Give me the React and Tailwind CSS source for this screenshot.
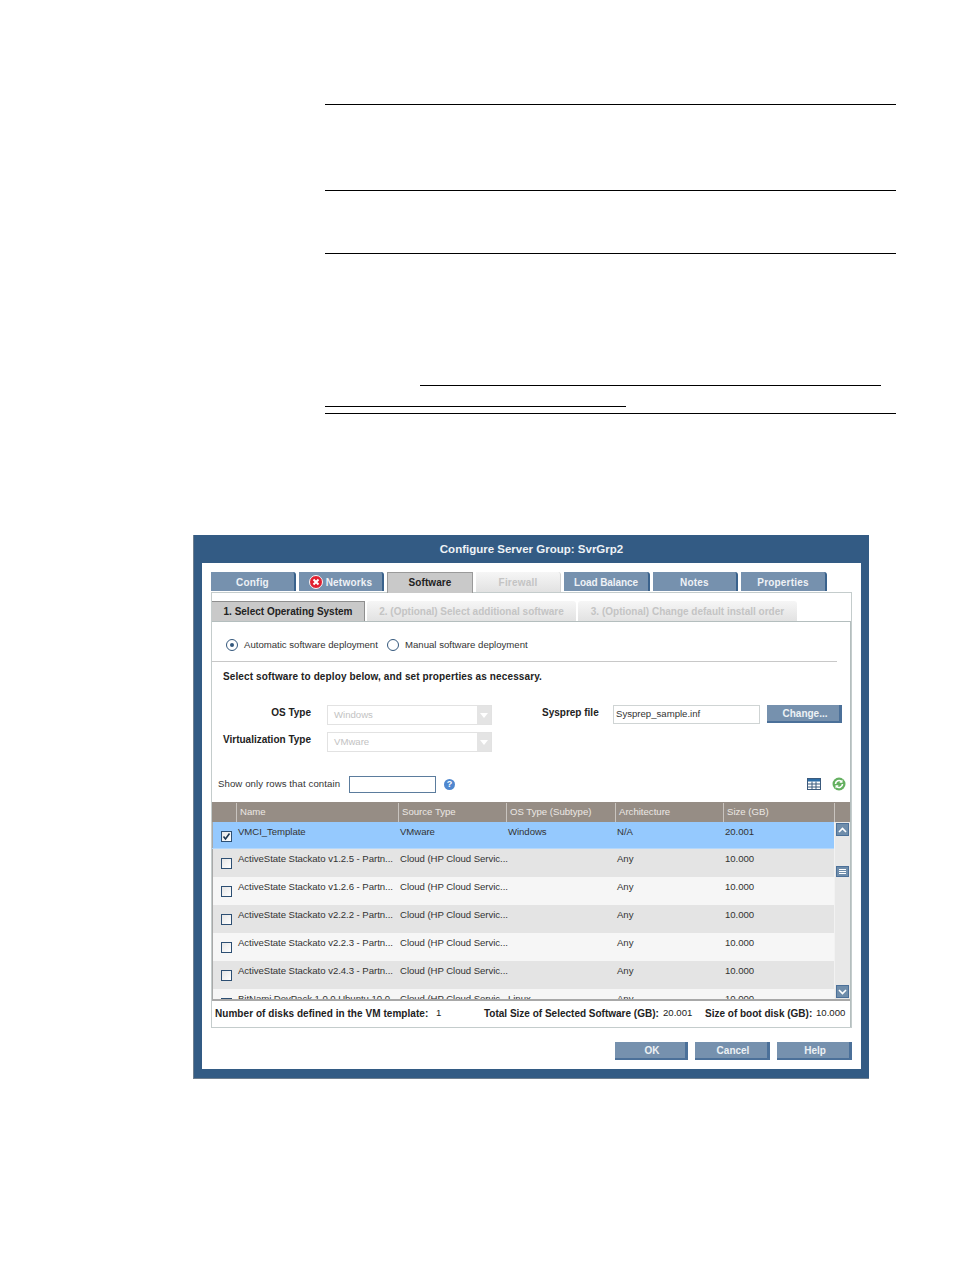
const FONT = "font-['Liberation_Sans',Arial,sans-serif]"

const TABS = [
  { label: 'Config', w: 'w-[85px]', track: 'tracking-[0.2px]' },
  { label: 'Networks', w: 'w-[85px]', track: 'tracking-[0.2px]', error: true },
  { label: 'Software', w: 'w-[86px]', track: 'tracking-[0.1px]', active: true },
  { label: 'Firewall', w: 'w-[85px]', track: 'tracking-[0.2px]', disabled: true },
  { label: 'Load Balance', w: 'w-[86px]', track: 'tracking-[-0.1px]' },
  { label: 'Notes', w: 'w-[85px]', track: 'tracking-[0.2px]' },
  { label: 'Properties', w: 'w-[86px]', track: 'tracking-[0.2px]' },
]

const STEPS = [
  { label: '1. Select Operating System', w: 'w-[153px]', active: true },
  { label: '2. (Optional) Select additional software', w: 'w-[209px]' },
  { label: '3. (Optional) Change default install order', w: 'w-[219px]' },
]

const COLS = ['w-[24px]', 'w-[162px]', 'w-[108px]', 'w-[109px]', 'w-[108px]', 'w-[111px]']

const ROWS = [
  { name: 'ActiveState Stackato v1.2.5 - Partn...' },
  { name: 'ActiveState Stackato v1.2.6 - Partn...' },
  { name: 'ActiveState Stackato v2.2.2 - Partn...' },
  { name: 'ActiveState Stackato v2.2.3 - Partn...' },
  { name: 'ActiveState Stackato v2.4.3 - Partn...' },
]

function ErrorIcon() {
  return (
    <svg width="14" height="14" viewBox="0 0 14 14" className="shrink-0">
      <circle cx="7" cy="7" r="6.5" fill="#e02030" stroke="#f7f7f7" />
      <path d="M4.5 4.5l5 5M9.5 4.5l-5 5" stroke="#fff" strokeWidth="2" />
    </svg>
  )
}

function Tab({ tab }) {
  if (tab.active) {
    return (
      <div className={`${tab.w} ${tab.track} h-[21px] -mb-px pb-px z-10 bg-[#c9c9c9] border-t border-x border-[#9a9a9a] flex items-center justify-center text-[10px] font-bold text-[#222]`}>
        {tab.label}
      </div>
    )
  }
  if (tab.disabled) {
    return (
      <div className={`${tab.w} ${tab.track} h-[20px] rounded-tr-[3px] bg-gradient-to-b from-[#f6f6f6] to-[#e2e2e2] border-r border-[#d4d4d4] flex items-center justify-center text-[10px] font-bold text-[#c4c4c4]`}>
        {tab.label}
      </div>
    )
  }
  return (
    <div className={`${tab.w} ${tab.track} h-[19px] mb-px pt-px rounded-tr-[3px] bg-[#7691ae] border-r-2 border-[#3a628c] flex items-center justify-center gap-[3px] text-[10px] font-bold text-[#eef2f6]`}>
      {tab.error && <ErrorIcon />}
      {tab.label}
    </div>
  )
}

function Radio({ checked }) {
  return (
    <span className="w-[12px] h-[12px] rounded-full border border-[#33577c] bg-white flex items-center justify-center shrink-0">
      {checked && <span className="w-[4px] h-[4px] rounded-full bg-[#33577c]" />}
    </span>
  )
}

function DisabledSelect({ value }) {
  return (
    <div className="w-[165px] h-[20px] border border-[#e2e2e2] flex items-center justify-between text-[9.6px] font-normal tracking-normal text-[#c2c2c2]">
      <span className="pl-[6px]">{value}</span>
      <span className="w-[14px] h-full bg-[#e4e4e4] flex items-center justify-center">
        <span className="w-0 h-0 border-x-[4px] border-x-transparent border-t-[5px] border-t-white" />
      </span>
    </div>
  )
}

function Btn({ label, w }) {
  return (
    <div className={`${w} h-[18px] pt-px pl-[4px] bg-[#7691ae] border-r-[3px] border-b-2 border-[#4b7099] flex items-center justify-center text-[10px] font-bold text-[#edf1f5]`}>
      {label}
    </div>
  )
}

function Checkbox({ checked }) {
  return (
    <span className="w-[11px] h-[11px] border border-[#2d4f73] bg-gradient-to-br from-[#e6e6e6] to-white flex items-center justify-center">
      {checked && (
        <svg width="9" height="9" viewBox="0 0 9 9">
          <path d="M1.5 4.5l2 2.5 4-5.5" fill="none" stroke="#1d3650" strokeWidth="1.6" />
        </svg>
      )}
    </span>
  )
}

function Row({ cells, checked, className }) {
  return (
    <div className={`flex shrink-0 text-[9.6px] tracking-[-0.05px] text-[#333] ${className}`}>
      <div className={`${COLS[0]} border-l border-[#a8a8a8] pt-[9px] pl-[8px]`}>
        <Checkbox checked={checked} />
      </div>
      {cells.map((c, i) => (
        <div key={i} className={`${COLS[i + 1]} pl-[2px] pt-[4px] leading-[12px] whitespace-nowrap`}>
          {c}
        </div>
      ))}
    </div>
  )
}

function ScrollBtn({ up }) {
  return (
    <div className="w-[13px] h-[13px] bg-[#6f8dab] border border-[#4b7099] flex items-center justify-center">
      <svg width="9" height="6" viewBox="0 0 9 6">
        <path d={up ? 'M1 5l3.5-3.5L8 5' : 'M1 1l3.5 3.5L8 1'} fill="none" stroke="#fff" strokeWidth="1.6" />
      </svg>
    </div>
  )
}

function SoftwareTable() {
  return (
    <div className="border-b-2 border-b-[#a8a8a8]">
      <div className="flex h-[20px] pt-px bg-[#968d85] text-[9.6px] text-[#ece8e4]">
        {['', 'Name', 'Source Type', 'OS Type (Subtype)', 'Architecture', 'Size (GB)'].map((h, i) => (
          <div key={i} className={`${i === 0 ? 'w-[25px]' : COLS[i]} pl-[3px] border-r border-[#c9c4bf] flex items-center`}>{h}</div>
        ))}
      </div>
      <div className="flex h-[177px] overflow-hidden">
        <div className="w-[622px] flex flex-col">
          <Row
            checked
            className="h-[27px] bg-[#95c9fe] border-b border-[#b5d8fb]"
            cells={['VMCI_Template', 'VMware', 'Windows', 'N/A', '20.001']}
          />
          {ROWS.map((r, i) => (
            <Row
              key={r.name}
              className={`h-[28px] ${i % 2 === 0 ? 'bg-[#e4e4e4]' : 'bg-[#f6f6f6]'}`}
              cells={[r.name, 'Cloud (HP Cloud Servic...', '', 'Any', '10.000']}
            />
          ))}
          <Row
            className="h-[28px] bg-[#f6f6f6]"
            cells={['BitNami DevPack 1.0.0 Ubuntu 10.0...', 'Cloud (HP Cloud Servic...', 'Linux', 'Any', '10.000']}
          />
        </div>
        <div className="w-[16px] bg-[#e8e8e8] border-l border-[#f2f2f2] pl-px pt-px pb-px flex flex-col justify-between">
          <div>
            <ScrollBtn up />
            <div className="mt-[30px] w-[13px] h-[11px] bg-[#6f8dab] border border-[#4b7099] flex flex-col items-center justify-center gap-px">
              <span className="w-[7px] h-px bg-white" />
              <span className="w-[7px] h-px bg-white" />
              <span className="w-[7px] h-px bg-white" />
            </div>
          </div>
          <ScrollBtn />
        </div>
      </div>
    </div>
  )
}

export default function App() {
  return (
    <div className={`${FONT} w-[954px] h-[1270px] bg-white overflow-hidden`}>
      {/* Ruled lines of the document page */}
      <div className="pt-[104px] pl-[325px] w-[896px]">
        <div className="w-[571px] h-px bg-black" />
        <div className="w-[571px] h-px bg-black mt-[85px]" />
        <div className="w-[571px] h-px bg-black mt-[62px]" />
        <div className="w-[461px] h-px bg-black mt-[131px] ml-[95px]" />
        <div className="w-[301px] h-px bg-black mt-[20px]" />
        <div className="w-[571px] h-px bg-black mt-[6px]" />
      </div>

      {/* Dialog */}
      <div className="mt-[121px] ml-[193px] w-[676px] h-[544px] bg-[#335b84] border-l border-b border-[#6f7f8f] pl-[8px] pr-[8px]">
        <div className="h-[28px] pt-px flex items-center justify-center text-[11.5px] font-bold text-[#eef2f6]">
          Configure Server Group: SvrGrp2
        </div>
        <div className="w-[659px] h-[506px] bg-white pt-[9px] pl-[9px]">
          <div className="flex items-end gap-[3px] h-[20px]">
            {TABS.map(t => <Tab key={t.label} tab={t} />)}
          </div>

          <div className="w-[641px] border border-[#c4cccc] pt-[8px]">
            <div className="flex gap-[2px] h-[20px] items-end">
              {STEPS.map(s => (
                <div
                  key={s.label}
                  className={`${s.w} h-[20px] flex items-center justify-center text-[10px] font-bold ${s.active
                    ? 'bg-[#c9c9c9] border-t border-r border-[#8f8f8f] text-[#222]'
                    : 'rounded-t-[3px] bg-gradient-to-b from-[#f6f6f6] to-[#e2e2e2] text-[#c4c4c4]'}`}
                >
                  {s.label}
                </div>
              ))}
            </div>

            <div className="border-t border-r border-[#b4bebe]">
              <div className="h-[39px] flex items-center pl-[14px] pt-[7px] text-[9.6px] text-[#333]">
                <Radio checked />
                <span className="ml-[6px] w-[134px] whitespace-nowrap">Automatic software deployment</span>
                <span className="ml-[9px]"><Radio /></span>
                <span className="ml-[6px] whitespace-nowrap">Manual software deployment</span>
              </div>
              <div className="w-[625px] h-px bg-[#c8c8c8]" />
              <div className="pl-[11px] pt-[9px] h-[43px] text-[10px] font-bold leading-[12px] tracking-[0.12px] text-[#222]">
                Select software to deploy below, and set properties as necessary.
              </div>

              {/* OS fields */}
              <div className="flex h-[47px] text-[10px] font-bold text-[#222]">
                <div className="w-[99px] flex flex-col items-end gap-[14px] pt-[1px] leading-[13px]">
                  <span>OS Type</span>
                  <span className="whitespace-nowrap">Virtualization Type</span>
                </div>
                <div className="ml-[16px] flex flex-col gap-[7px]">
                  <DisabledSelect value="Windows" />
                  <DisabledSelect value="VMware" />
                </div>
                <div className="ml-[50px] w-[71px] pt-[1px] leading-[13px] whitespace-nowrap">Sysprep file</div>
                <div className="w-[147px] h-[19px] border border-[#cfd4d4] flex items-center pl-[2px] font-normal text-[9.6px] text-[#333]">
                  Sysprep_sample.inf
                </div>
                <div className="ml-[7px]"><Btn label="Change..." w="w-[75px]" /></div>
              </div>

              {/* Filter row */}
              <div className="flex items-center h-[50px] pt-[14px] pl-[6px] text-[9.6px] text-[#333]">
                <span className="w-[131px] whitespace-nowrap tracking-[0.1px]">Show only rows that contain</span>
                <div className="w-[87px] h-[17px] border border-[#5b7c9d]" />
                <span className="ml-[8px] w-[11px] h-[11px] rounded-full bg-[#4f87cf] text-white text-[9px] font-bold leading-[11px] text-center">?</span>
                <svg width="14" height="12" viewBox="0 0 14 12" className="ml-[352px]">
                  <rect x="0.5" y="0.5" width="13" height="11" fill="#fff" stroke="#3b5a7c" />
                  <rect x="1" y="1" width="12" height="2.5" fill="#2d6ea8" />
                  <path d="M0.5 6h13M0.5 9h13M5 3.5v8M9 3.5v8" stroke="#3b5a7c" />
                </svg>
                <svg width="14" height="14" viewBox="0 0 14 14" className="ml-[11px]">
                  <circle cx="7" cy="7" r="6.5" fill="#64b060" />
                  <path d="M3.5 7a3.5 3.5 0 0 1 6-2.4M10.5 7a3.5 3.5 0 0 1-6 2.4" fill="none" stroke="#fff" strokeWidth="1.6" />
                  <path d="M10.5 2.5v3.2H7.3zM3.5 11.5V8.3h3.2z" fill="#fff" />
                </svg>
              </div>

              <SoftwareTable />

              {/* Totals */}
              <div className="h-[26px] pb-[2px] flex items-center pl-[3px] text-[10px] font-bold text-[#222] whitespace-nowrap">
                <span className="w-[214px] tracking-[0.05px]">Number of disks defined in the VM template:</span>
                <span className="ml-[7px] w-[5px] font-normal text-[9.6px]">1</span>
                <span className="ml-[43px] w-[175px]">Total Size of Selected Software (GB):</span>
                <span className="ml-[4px] w-[27px] font-normal text-[9.6px]">20.001</span>
                <span className="ml-[15px] w-[107px]">Size of boot disk (GB):</span>
                <span className="ml-[4px] font-normal text-[9.6px]">10.000</span>
              </div>
            </div>
          </div>

          <div className="flex justify-end gap-[7px] w-[641px] mt-[14px]">
            <Btn label="OK" w="w-[73px]" />
            <Btn label="Cancel" w="w-[75px]" />
            <Btn label="Help" w="w-[75px]" />
          </div>
        </div>
      </div>
    </div>
  )
}
